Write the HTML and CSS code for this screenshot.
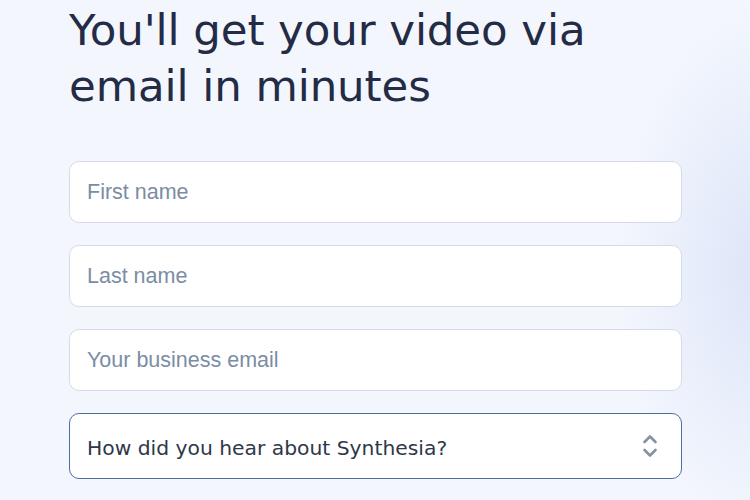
FILE: index.html
```html
<!DOCTYPE html>
<html lang="en">
<head>
<meta charset="utf-8">
<title>Get your video</title>
<link rel="stylesheet" href="styles.css">
</head>
<body>
<main class="page">
  <h1 class="title">You'll get your video via<br>email in minutes</h1>
  <form class="form">
    <input class="field" type="text" placeholder="First name">
    <input class="field" type="text" placeholder="Last name">
    <input class="field" type="email" placeholder="Your business email">
    <div class="select">
      <span class="select-label">How did you hear about Synthesia?</span>
      <svg class="chevrons" width="18" height="26" viewBox="0 0 18 26" fill="none" stroke="#8592a3" stroke-width="2.6" stroke-linecap="round" stroke-linejoin="round">
        <path d="M3.5 9 L9 3.5 L14.5 9"/>
        <path d="M3.5 17 L9 22.5 L14.5 17"/>
      </svg>
    </div>
  </form>
</main>
</body>
</html>
```
FILE: styles.css
```css
html, body {
  margin: 0;
  height: 100%;
}
body {
  background:
    radial-gradient(ellipse 140px 260px at 760px 270px, rgba(220,228,248,0.95), rgba(220,228,248,0) 100%),
    #f3f6fd;
  overflow: hidden;
}
.page {
  padding: 0 68px 0 69px;
  width: 613px;
}
.title {
  margin: 0;
  padding-top: 2px;
  font-family: "DejaVu Sans", sans-serif;
  font-weight: 400;
  font-size: 43.5px;
  line-height: 56px;
  color: #232b45;
  letter-spacing: -0.1px;
}
.form {
  margin-top: 47px;
  display: flex;
  flex-direction: column;
  gap: 22px;
}
.field {
  box-sizing: border-box;
  height: 62px;
  width: 100%;
  margin: 0;
  padding: 0 17px;
  border: 1px solid #d6dce7;
  border-radius: 10px;
  background: #fff;
  font-family: "Liberation Sans", Arial, sans-serif;
  font-size: 21.5px;
  color: #1f2a44;
  outline: none;
}
.field::placeholder {
  color: #7b8da4;
}
.select {
  box-sizing: border-box;
  height: 66px;
  display: flex;
  align-items: center;
  justify-content: space-between;
  padding: 3px 22px 0 17px;
  border: 1.5px solid #4c6ea6;
  border-radius: 10px;
  background: #fff;
}
.select-label {
  font-family: "DejaVu Sans", sans-serif;
  font-size: 20.3px;
  color: #2f3749;
}
.chevrons {
  display: block;
  margin-top: -3px;
}
```
